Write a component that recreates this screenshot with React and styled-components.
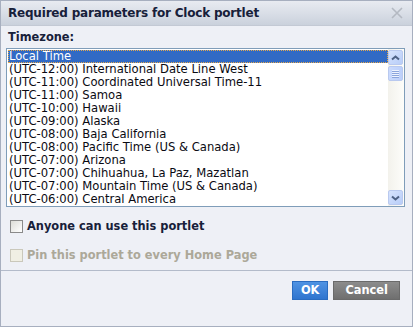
import React from 'react';
import styled, { createGlobalStyle } from 'styled-components';

const GlobalStyle = createGlobalStyle`
  html, body {
    margin: 0;
    padding: 0;
    background: #ffffff;
  }
  * {
    box-sizing: border-box;
  }
`;

const Dialog = styled.div`
  width: 413px;
  height: 327px;
  display: flex;
  flex-direction: column;
  border: 1px solid #a7afbf;
  background: #eef0f6;
  font-family: "DejaVu Sans", Verdana, sans-serif;
  color: #1b1b1b;
`;

const TitleBar = styled.div`
  height: 25px;
  flex: none;
  display: flex;
  align-items: center;
  justify-content: space-between;
  padding: 0 8px 0 7px;
  background: linear-gradient(to bottom, #e8ebf1 0%, #d8dde6 55%, #cad1dc 100%);
  border-bottom: 1px solid #c3c9d4;
`;

const Title = styled.div`
  font-size: 12px;
  font-weight: bold;
  color: #17203a;
  letter-spacing: -0.2px;
`;

const CloseButton = styled.div`
  width: 14px;
  height: 14px;
  display: flex;
  align-items: center;
  justify-content: center;
`;

const Body = styled.div`
  flex: 1;
  display: flex;
  flex-direction: column;
  padding: 4px 7px 0 5px;
`;

const FieldLabel = styled.div`
  font-size: 11.4px;
  font-weight: bold;
  color: #17203a;
  padding: 0 0 4px 2px;
`;

const ListBox = styled.div`
  height: 159px;
  display: flex;
  border: 1px solid #7f9db9;
  background: #ffffff;
`;

const Options = styled.div`
  flex: 1;
  padding: 1px 0 0 1px;
  overflow: hidden;
`;

const Option = styled.div`
  height: 13px;
  line-height: 12px;
  font-size: 11.6px;
  padding-left: 1px;
  white-space: nowrap;
  color: ${p => (p.selected ? '#ffffff' : '#0a0a12')};
  background: ${p => (p.selected ? '#316ac5' : 'transparent')};
  outline: ${p => (p.selected ? '1px dotted #e4a84c' : 'none')};
  outline-offset: -1px;
`;

const ScrollBar = styled.div`
  width: 16px;
  flex: none;
  display: flex;
  flex-direction: column;
  padding: 1px 0;
  background: linear-gradient(to right, #f3f2ec, #fdfdfa);
`;

const ScrollButton = styled.div`
  width: 15px;
  height: 15px;
  display: flex;
  align-items: center;
  justify-content: center;
  border: 1px solid #b9c9ef;
  border-radius: 2px;
  background: linear-gradient(to bottom right, #d6e3fd, #b8cdf8);
  margin-top: ${p => (p.push ? 'auto' : '0')};
`;

const Thumb = styled.div`
  width: 15px;
  height: 15px;
  margin-top: 1px;
  display: flex;
  flex-direction: column;
  align-items: center;
  justify-content: center;
  gap: 1px;
  border: 1px solid #b9c9ef;
  border-radius: 2px;
  background: linear-gradient(to right, #cadafd, #bccffa);
`;

const Grip = styled.div`
  width: 7px;
  height: 1px;
  background: #eef3fe;
  box-shadow: 0 1px 0 #8ca5dc;
`;

const CheckRow = styled.label`
  display: flex;
  align-items: center;
  gap: 4px;
  padding-left: 4px;
  margin-top: ${p => p.top}px;
  font-size: 11.4px;
  font-weight: bold;
  color: ${p => (p.disabled ? '#aca899' : '#17203a')};
`;

const CheckBox = styled.span`
  width: 13px;
  height: 13px;
  flex: none;
  border: 1px solid ${p => (p.disabled ? '#cac8bb' : '#8a8a8a')};
  background: ${p =>
    p.disabled ? '#f0efe4' : 'linear-gradient(to bottom right, #dcdcd7, #ffffff)'};
`;

const Footer = styled.div`
  height: 56px;
  flex: none;
  display: flex;
  justify-content: flex-end;
  align-items: flex-start;
  gap: 5px;
  padding: 10px 12px 0 0;
  border-top: 1px solid #b3bbca;
`;

const Button = styled.button`
  height: 19px;
  padding: 0 ${p => p.pad}px;
  border: 1px solid ${p => (p.primary ? '#2a6cc0' : '#6a6a6a')};
  background: ${p =>
    p.primary
      ? 'linear-gradient(to bottom, #4f93e3, #2f75cf)'
      : 'linear-gradient(to bottom, #8c8c8c, #6f6f6f)'};
  color: #ffffff;
  font-family: "DejaVu Sans", Verdana, sans-serif;
  font-size: 11.4px;
  font-weight: bold;
  line-height: 17px;
  cursor: pointer;
`;

const zones = [
  'Local Time',
  '(UTC-12:00) International Date Line West',
  '(UTC-11:00) Coordinated Universal Time-11',
  '(UTC-11:00) Samoa',
  '(UTC-10:00) Hawaii',
  '(UTC-09:00) Alaska',
  '(UTC-08:00) Baja California',
  '(UTC-08:00) Pacific Time (US & Canada)',
  '(UTC-07:00) Arizona',
  '(UTC-07:00) Chihuahua, La Paz, Mazatlan',
  '(UTC-07:00) Mountain Time (US & Canada)',
  '(UTC-06:00) Central America',
];

const Arrow = ({ down }) => (
  <svg width="9" height="6" viewBox="0 0 9 6">
    <path
      d={down ? 'M1 1.5 L4.5 4.5 L8 1.5' : 'M1 4.5 L4.5 1.5 L8 4.5'}
      fill="none"
      stroke="#4d6185"
      strokeWidth="2"
    />
  </svg>
);

export default function App() {
  return (
    <>
      <GlobalStyle />
      <Dialog>
        <TitleBar>
          <Title>Required parameters for Clock portlet</Title>
          <CloseButton>
            <svg width="12" height="12" viewBox="0 0 12 12">
              <path d="M1 1 L11 11 M11 1 L1 11" stroke="#b4b9c2" strokeWidth="1.6" />
            </svg>
          </CloseButton>
        </TitleBar>
        <Body>
          <FieldLabel>Timezone:</FieldLabel>
          <ListBox>
            <Options>
              {zones.map((z, i) => (
                <Option key={z} selected={i === 0}>{z}</Option>
              ))}
            </Options>
            <ScrollBar>
              <ScrollButton><Arrow /></ScrollButton>
              <Thumb><Grip /><Grip /><Grip /><Grip /></Thumb>
              <ScrollButton push><Arrow down /></ScrollButton>
            </ScrollBar>
          </ListBox>
          <CheckRow top={12}>
            <CheckBox />
            Anyone can use this portlet
          </CheckRow>
          <CheckRow top={15} disabled>
            <CheckBox disabled />
            Pin this portlet to every Home Page
          </CheckRow>
        </Body>
        <Footer>
          <Button primary pad={8}>OK</Button>
          <Button pad={11}>Cancel</Button>
        </Footer>
      </Dialog>
    </>
  );
}
